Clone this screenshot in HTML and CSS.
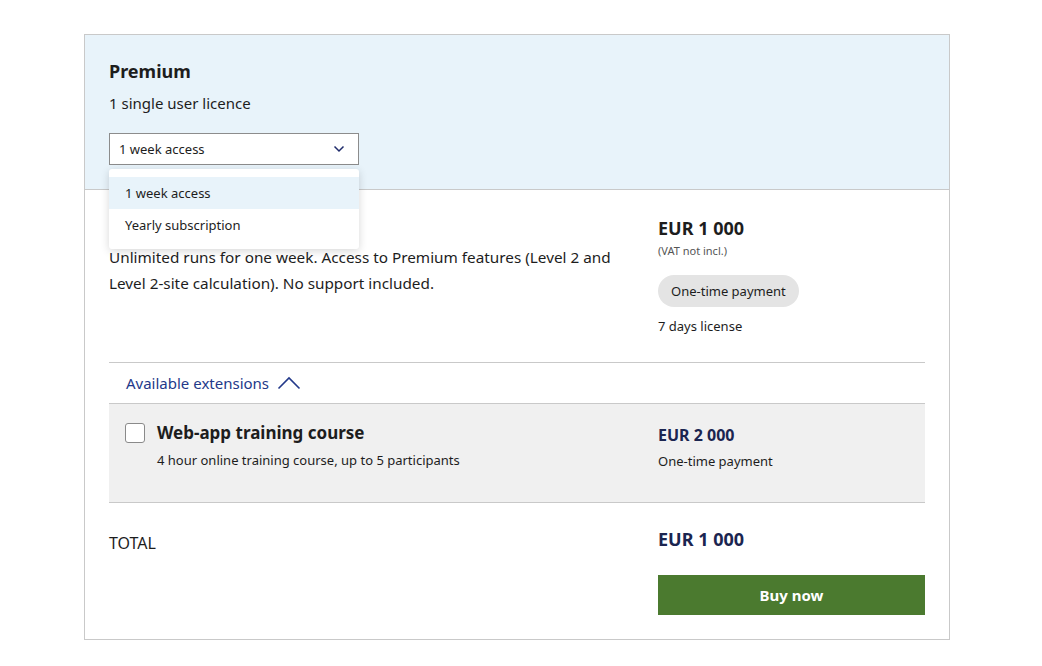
FILE: index.html
```html
<!DOCTYPE html>
<html lang="en">
<head>
<meta charset="utf-8">
<title>Premium</title>
<link rel="stylesheet" href="styles.css">
</head>
<body>
<div class="card">
  <div class="card-head">
    <h2 class="plan-name">Premium</h2>
    <p class="plan-sub">1 single user licence</p>
    <div class="select-wrap">
      <div class="select">
        <span>1 week access</span>
        <svg class="chev" width="12" height="8" viewBox="0 0 12 8"><path d="M1.5 1.5 L6 6 L10.5 1.5" fill="none" stroke="#1f2b6b" stroke-width="1.5"/></svg>
      </div>
      <ul class="menu">
        <li class="menu-item active">1 week access</li>
        <li class="menu-item">Yearly subscription</li>
      </ul>
    </div>
  </div>
  <div class="card-body">
    <div class="grid main">
      <div class="left">
        <div class="opt-spacer"></div>
        <p class="desc">Unlimited runs for one week. Access to Premium features (Level 2 and Level 2-site calculation). No support included.</p>
      </div>
      <div class="right">
        <div class="price">EUR 1 000</div>
        <div class="vat">(VAT not incl.)</div>
        <div class="pill">One-time payment</div>
        <div class="license">7 days license</div>
      </div>
    </div>
    <div class="ext-toggle">
      <span>Available extensions</span>
      <svg width="24" height="14" viewBox="0 0 24 14"><path d="M1.5 12.5 L12 2 L22.5 12.5" fill="none" stroke="#23398a" stroke-width="1.6"/></svg>
    </div>
    <div class="grid ext">
      <div class="ext-left">
        <span class="checkbox"></span>
        <div>
          <div class="ext-title">Web-app training course</div>
          <div class="ext-sub">4 hour online training course, up to 5 participants</div>
        </div>
      </div>
      <div class="right">
        <div class="ext-price">EUR 2 000</div>
        <div class="ext-pay">One-time payment</div>
      </div>
    </div>
    <div class="grid total">
      <div class="total-label">TOTAL</div>
      <div class="right">
        <div class="total-price">EUR 1 000</div>
        <button class="buy">Buy now</button>
      </div>
    </div>
  </div>
</div>
</body>
</html>
```
FILE: styles.css
```css
* { box-sizing: border-box; }
body {
  margin: 0;
  padding: 34px 0 0 84px;
  font-family: "Noto Sans", Lato, sans-serif;
  color: #1d1d1d;
  background: #fff;
}
.card {
  width: 866px;
  border: 1px solid #c9c9c9;
  background: #fff;
}
.card-head {
  background: #e8f3fa;
  border-bottom: 1px solid #c9c9c9;
  padding: 24px 24px 24px;
}
.plan-name {
  margin: 0;
  font-size: 18px;
  line-height: 24px;
  font-weight: 700;
}
.plan-sub {
  margin: 9px 0 0;
  font-size: 15px;
  line-height: 22px;
}
.select-wrap {
  position: relative;
  width: 250px;
  margin-top: 19px;
}
.select {
  height: 32px;
  border: 1px solid #8c8c8c;
  background: #fff;
  display: flex;
  align-items: center;
  justify-content: space-between;
  padding: 0 13px 0 9px;
  font-size: 13px;
}
.menu {
  position: absolute;
  top: 36px;
  left: 0;
  width: 250px;
  margin: 0;
  padding: 8px 0;
  list-style: none;
  background: #fff;
  border-radius: 3px;
  box-shadow: 0 2px 8px rgba(0,0,0,0.16);
  z-index: 5;
}
.menu-item {
  height: 32px;
  display: flex;
  align-items: center;
  padding: 0 16px;
  font-size: 13px;
}
.menu-item.active { background: #e8f3fa; }
.card-body { padding: 26px 24px 24px; }
.grid {
  display: grid;
  grid-template-columns: 520px 1fr;
  column-gap: 29px;
}
.opt-spacer { height: 25px; }
.desc {
  margin: 3px 0 0;
  font-size: 15.3px;
  line-height: 26px;
}
.price {
  font-size: 18px;
  line-height: 24px;
  font-weight: 700;
}
.vat {
  margin-top: 3px;
  font-size: 11px;
  line-height: 16px;
  color: #555;
}
.pill {
  display: inline-flex;
  align-items: center;
  height: 32px;
  padding: 0 13px;
  margin-top: 16px;
  border-radius: 16px;
  background: #e4e4e4;
  font-size: 13px;
}
.license {
  margin-top: 10px;
  font-size: 13px;
  line-height: 18px;
}
.main {
  padding-bottom: 27px;
  border-bottom: 1px solid #c9c9c9;
}
.ext-toggle {
  height: 40px;
  display: flex;
  align-items: center;
  gap: 8px;
  padding-left: 17px;
  color: #23398a;
  font-size: 15px;
}
.ext {
  background: #f0f0f0;
  border-top: 1px solid #c9c9c9;
  border-bottom: 1px solid #c9c9c9;
  padding: 17px 0 32px;
}
.ext-left {
  display: flex;
  gap: 12px;
  padding-left: 16px;
}
.checkbox {
  flex: none;
  width: 20px;
  height: 20px;
  margin-top: 2px;
  border: 1px solid #8a8a8a;
  border-radius: 3px;
  background: #fff;
}
.ext-title {
  font-size: 17px;
  line-height: 24px;
  font-weight: 700;
}
.ext-sub {
  margin-top: 6px;
  font-size: 13px;
  line-height: 18px;
}
.ext-price {
  font-size: 16px;
  line-height: 24px;
  font-weight: 700;
  color: #1b2550;
  margin-top: 2px;
}
.ext-pay {
  margin-top: 5px;
  font-size: 13px;
  line-height: 18px;
}
.total { padding-top: 24px; }
.total-label {
  margin-top: 4px;
  font-size: 16px;
  line-height: 24px;
}
.total-price {
  font-size: 18px;
  line-height: 24px;
  font-weight: 700;
  color: #1b2550;
}
.buy {
  display: block;
  width: 100%;
  height: 40px;
  margin-top: 24px;
  border: 0;
  background: #4b7a2f;
  color: #fff;
  font-family: inherit;
  font-size: 15px;
  font-weight: 700;
}
```
